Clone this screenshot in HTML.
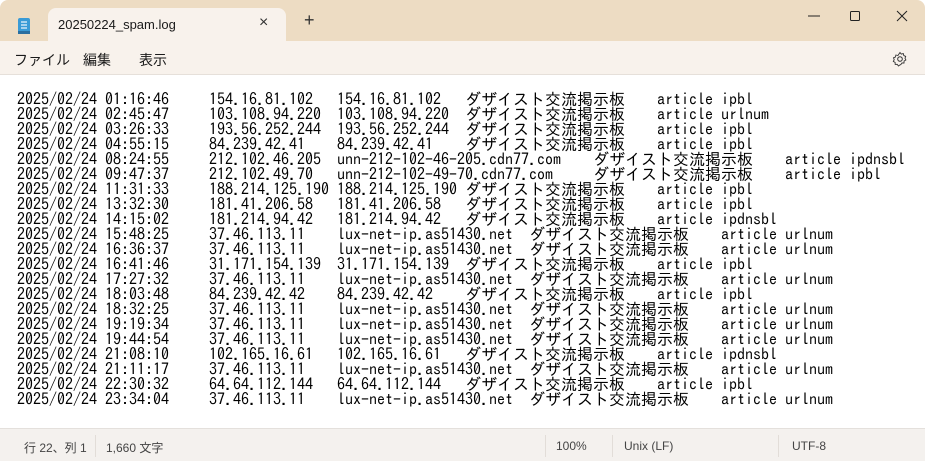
<!DOCTYPE html>
<html><head><meta charset="utf-8"><style>
*{margin:0;padding:0;box-sizing:border-box}
body{width:925px;height:461px;overflow:hidden;background:#fff;font-family:"Liberation Sans","Noto Sans CJK JP",sans-serif;position:relative}
.title{position:absolute;left:0;top:0;width:925px;height:41px;background:#eddcc3;border-radius:8px 8px 0 0}
.tab{position:absolute;left:48px;top:8px;width:238px;height:33px;background:#f8f2ec;border-radius:8px 8px 0 0;font-size:13px;color:#1a1a1a}
.menu{position:absolute;left:0;top:41px;width:925px;height:34px;background:#f8f2ec;border-bottom:1px solid #e6e0da;font-size:14px;color:#1a1a1a}
.menu span{position:absolute;top:9px}
pre{position:absolute;left:17px;top:92px;font-family:"IPAGothic","Liberation Mono",monospace;font-size:16px;line-height:15px;tab-size:8;-moz-tab-size:8;color:#000}
.status{position:absolute;left:0;top:428px;width:925px;height:33px;background:#f4f1ee;border-top:1px solid #e4e0dc;font-size:12px;color:#444}
.status span{position:absolute;top:10px}
.sep{position:absolute;top:6px;width:1px;height:22px;background:#e2ddd8}
</style></head><body>
<div class="title">
<svg style="position:absolute;left:17px;top:17px" width="14" height="18" viewBox="0 0 14 18"><rect x="1" y="1" width="12" height="16" rx="2" fill="#3a9bd6"/><rect x="1" y="14" width="12" height="3" fill="#2a6fa0"/><path d="M4 5h6M4 8h6M4 11h6" stroke="#e9f4fb" stroke-width="1.2"/></svg>
<div class="tab"><span style="position:absolute;left:10px;top:9px">20250224_spam.log</span>
<span style="position:absolute;left:211px;top:6px;font-size:16px;color:#333">×</span></div>
<span style="position:absolute;left:304px;top:10px;font-size:18px;color:#333">+</span>
<svg style="position:absolute;left:800px;top:10px" width="120" height="20"><path d="M8 6h12" stroke="#222"/><rect x="50.5" y="1.5" width="9" height="9" rx="1" fill="none" stroke="#222"/><path d="M97 1l10 10M107 1l-10 10" stroke="#222"/></svg>
</div>
<div class="menu"><span style="left:14px">ファイル</span><span style="left:83px">編集</span><span style="left:139px">表示</span>
<svg style="position:absolute;left:892px;top:10px" width="16" height="16" viewBox="0 0 16 16"><circle cx="8" cy="8" r="2.3" fill="none" stroke="#333"/><path d="M8 1.5l1.3 1.6 2-.5.5 2 1.9.8-.7 1.9.9 1.7-1.8 1-.1 2-2-.1-1.2 1.7L8 13.9 6.4 15l-1.2-1.7-2 .1-.1-2-1.8-1 .9-1.7-.7-1.9 1.9-.8.5-2 2 .5z" fill="none" stroke="#333" stroke-width=".9"/></svg>
</div>
<pre>2025/02/24 01:16:46	154.16.81.102	154.16.81.102	ダザイスト交流掲示板	article ipbl
2025/02/24 02:45:47	103.108.94.220	103.108.94.220	ダザイスト交流掲示板	article urlnum
2025/02/24 03:26:33	193.56.252.244	193.56.252.244	ダザイスト交流掲示板	article ipbl
2025/02/24 04:55:15	84.239.42.41	84.239.42.41	ダザイスト交流掲示板	article ipbl
2025/02/24 08:24:55	212.102.46.205	unn-212-102-46-205.cdn77.com	ダザイスト交流掲示板	article ipdnsbl
2025/02/24 09:47:37	212.102.49.70	unn-212-102-49-70.cdn77.com	ダザイスト交流掲示板	article ipbl
2025/02/24 11:31:33	188.214.125.190	188.214.125.190	ダザイスト交流掲示板	article ipbl
2025/02/24 13:32:30	181.41.206.58	181.41.206.58	ダザイスト交流掲示板	article ipbl
2025/02/24 14:15:02	181.214.94.42	181.214.94.42	ダザイスト交流掲示板	article ipdnsbl
2025/02/24 15:48:25	37.46.113.11	lux-net-ip.as51430.net	ダザイスト交流掲示板	article urlnum
2025/02/24 16:36:37	37.46.113.11	lux-net-ip.as51430.net	ダザイスト交流掲示板	article urlnum
2025/02/24 16:41:46	31.171.154.139	31.171.154.139	ダザイスト交流掲示板	article ipbl
2025/02/24 17:27:32	37.46.113.11	lux-net-ip.as51430.net	ダザイスト交流掲示板	article urlnum
2025/02/24 18:03:48	84.239.42.42	84.239.42.42	ダザイスト交流掲示板	article ipbl
2025/02/24 18:32:25	37.46.113.11	lux-net-ip.as51430.net	ダザイスト交流掲示板	article urlnum
2025/02/24 19:19:34	37.46.113.11	lux-net-ip.as51430.net	ダザイスト交流掲示板	article urlnum
2025/02/24 19:44:54	37.46.113.11	lux-net-ip.as51430.net	ダザイスト交流掲示板	article urlnum
2025/02/24 21:08:10	102.165.16.61	102.165.16.61	ダザイスト交流掲示板	article ipdnsbl
2025/02/24 21:11:17	37.46.113.11	lux-net-ip.as51430.net	ダザイスト交流掲示板	article urlnum
2025/02/24 22:30:32	64.64.112.144	64.64.112.144	ダザイスト交流掲示板	article ipbl
2025/02/24 23:34:04	37.46.113.11	lux-net-ip.as51430.net	ダザイスト交流掲示板	article urlnum</pre>
<div class="status">
<span style="left:24px">行 22、列 1</span><div class="sep" style="left:95px"></div>
<span style="left:106px">1,660 文字</span>
<div class="sep" style="left:545px"></div><span style="left:556px">100%</span>
<div class="sep" style="left:612px"></div><span style="left:624px">Unix (LF)</span>
<div class="sep" style="left:778px"></div><span style="left:792px">UTF-8</span>
</div>
</body></html>
